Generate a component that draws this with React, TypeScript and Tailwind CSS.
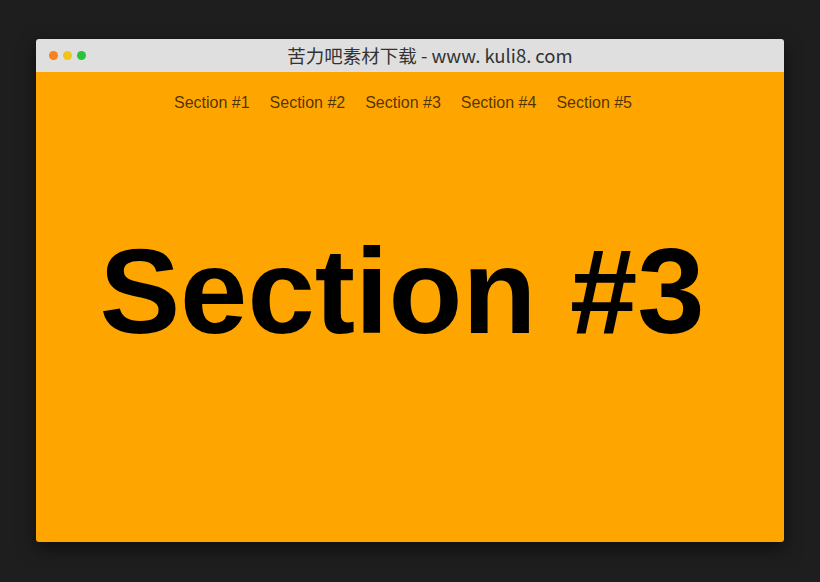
import React from "react";

export default function App() {
  const items = ["Section #1", "Section #2", "Section #3", "Section #4", "Section #5"];
  return (
    <div className="w-[820px] h-[582px] bg-[#1e1e1e] flex items-start justify-center pt-[39px] overflow-hidden">
      <div className="w-[748px] h-[503px] flex flex-col rounded-[3px] overflow-hidden shadow-[0_6px_18px_rgba(0,0,0,0.55)]">
        <div className="h-[33px] bg-[#dfdfdf] flex items-center relative">
          <div className="flex items-center gap-[5px] pl-[13px]">
            <span className="w-[9px] h-[9px] rounded-full bg-[#f5821f]" />
            <span className="w-[9px] h-[9px] rounded-full bg-[#efc51c]" />
            <span className="w-[9px] h-[9px] rounded-full bg-[#2cc23a]" />
          </div>
          <div
            className="flex-1 text-center pr-[10px] text-[18.5px] leading-[33px] text-[#333] whitespace-nowrap"
            style={{ fontFamily: '"Noto Sans CJK SC", "Noto Sans", sans-serif' }}
          >
            苦力吧素材下载 - www<span className="mr-[4px]">.</span>kuli8<span className="mr-[4px]">.</span>com
          </div>
        </div>
        <div className="flex-1 bg-[#ffa500] flex flex-col" style={{ fontFamily: '"Liberation Sans", Arial, sans-serif' }}>
          <nav className="flex justify-center gap-[20px] pt-[22px] pr-[14px]">
            {items.map((t) => (
              <span key={t} className="text-[16px] leading-[18px] text-[rgba(0,0,0,0.7)]">
                {t}
              </span>
            ))}
          </nav>
          <h1 className="mt-[119px] pr-[16px] text-center text-[121px] leading-none font-bold text-black whitespace-nowrap">
            Section #3
          </h1>
        </div>
      </div>
    </div>
  );
}
